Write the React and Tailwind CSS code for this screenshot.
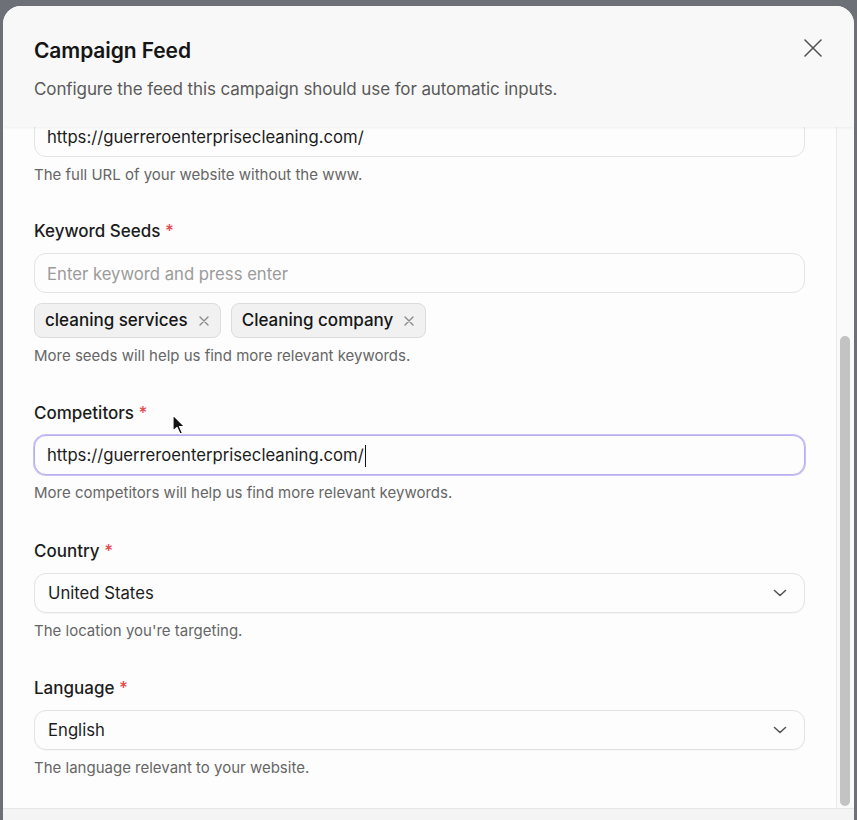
import { useState } from "react";

const font = { fontFamily: "Inter, 'Noto Sans', sans-serif" };

const Chevron = () => (
  <svg width="14" height="8" viewBox="0 0 14 8" fill="none" className="text-[#555]">
    <path d="M1.5 1.5L7 6.5L12.5 1.5" stroke="currentColor" strokeWidth="1.6" strokeLinecap="round" strokeLinejoin="round" />
  </svg>
);

const SmallX = () => (
  <svg width="10" height="10" viewBox="0 0 10 10" fill="none" className="text-[#8a8a8a]">
    <path d="M1 1L9 9M9 1L1 9" stroke="currentColor" strokeWidth="1.4" strokeLinecap="round" />
  </svg>
);

const Label = ({ children }) => (
  <label className="block h-6 text-[17px] leading-6 font-medium text-[#1c1c1c]">
    {children} <span className="text-[#e5484d]">*</span>
  </label>
);

const Help = ({ children }) => (
  <p className="mt-2 h-5 text-[15px] leading-5 text-[#666]">{children}</p>
);

const Select = ({ value }) => (
  <div className="mt-[10px] h-10 w-full flex items-center justify-between rounded-xl border border-[#e3e3e3] bg-[#fdfdfd] pl-[13px] pr-[17px] shadow-[0_1px_1px_rgba(0,0,0,0.03)]">
    <span className="pt-[2px] text-[16.7px] text-[#1c1c1c]">{value}</span>
    <Chevron />
  </div>
);

export default function App() {
  const [seeds, setSeeds] = useState(["cleaning services", "Cleaning company"]);

  return (
    <div className="w-[857px] h-[820px] overflow-hidden bg-[#6d7076] pt-[6px] pl-[3px] pr-[3px]" style={font}>
      <div className="relative h-full flex flex-col rounded-t-[18px] bg-[#fdfdfd] overflow-hidden">
        {/* header */}
        <div className="relative z-10 h-[121px] shrink-0 bg-[#f8f8f8] px-[31px] shadow-[0_1px_3px_rgba(0,0,0,0.06)]">
          <div className="flex items-start justify-between">
            <h2 className="mt-[31px] text-[21px] leading-7 font-semibold text-[#151515] tracking-[-0.1px]">Campaign Feed</h2>
            <button className="mt-[33px] mr-[1px] text-[#555]">
              <svg width="18" height="18" viewBox="0 0 18 18" fill="none">
                <path d="M1 1L17 17M17 1L1 17" stroke="currentColor" strokeWidth="1.6" strokeLinecap="round" />
              </svg>
            </button>
          </div>
          <p className="mt-[12px] text-[17px] leading-6 text-[#5a5a5a] tracking-[-0.1px]">Configure the feed this campaign should use for automatic inputs.</p>
        </div>

        {/* body */}
        <div className="flex flex-1 min-h-0">
          <div className="flex-1 overflow-hidden pl-[31px] pr-[31px]">
            <div className="mt-[-10px]">
              <div className="h-10 w-full flex items-center rounded-xl border border-[#e3e3e3] bg-[#fdfdfd] px-[12px]">
                <span className="pt-[1px] text-[16.7px] text-[#1c1c1c]">https://guerreroenterprisecleaning.com/</span>
              </div>
              <Help>The full URL of your website without the www.</Help>
            </div>

            <div className="mt-[34px]">
              <Label>Keyword Seeds</Label>
              <input
                placeholder="Enter keyword and press enter"
                className="mt-[10px] h-10 w-full rounded-xl border border-[#e3e3e3] bg-[#fdfdfd] px-[12px] pt-[1px] text-[16.7px] text-[#1c1c1c] placeholder:text-[#9b9b9b] outline-none"
              />
              <div className="mt-[10px] flex gap-[10px]">
                {seeds.map((s) => (
                  <span
                    key={s}
                    className="h-[35px] inline-flex items-center gap-[11px] rounded-lg border border-[#dcdcdc] bg-[#f1f1f1] pl-[10px] pr-[11px] text-[17px] font-medium text-[#161616]"
                  >
                    {s}
                    <button onClick={() => setSeeds(seeds.filter((x) => x !== s))}>
                      <SmallX />
                    </button>
                  </span>
                ))}
              </div>
              <Help>More seeds will help us find more relevant keywords.</Help>
            </div>

            <div className="mt-[35px]">
              <Label>Competitors</Label>
              <div className="mt-[10px] h-10 w-full flex items-center rounded-xl border border-[#b7aef2] ring-1 ring-[#c9c2f6] bg-[#fdfdfd] px-[12px] pt-[2px]">
                <span className="text-[16.7px] text-[#1c1c1c]">https://guerreroenterprisecleaning.com/</span>
                <span className="ml-px h-[22px] w-px bg-[#111]" />
              </div>
              <Help>More competitors will help us find more relevant keywords.</Help>
            </div>

            <div className="mt-[36px]">
              <Label>Country</Label>
              <Select value="United States" />
              <Help>The location you're targeting.</Help>
            </div>

            <div className="mt-[35px]">
              <Label>Language</Label>
              <Select value="English" />
              <Help>The language relevant to your website.</Help>
            </div>
          </div>

          {/* scrollbar */}
          <div className="w-[18px] shrink-0 border-l border-[#ebebeb] bg-[#fafafa] pt-[209px] pb-[2px] pl-[3px] pr-[4px]">
            <div className="h-full w-[10px] rounded-full bg-[#c3c3c3]" />
          </div>
        </div>

        {/* footer */}
        <div className="h-[12px] shrink-0 border-t border-[#e6e6e6] bg-[#f4f4f4]" />

        {/* mouse pointer */}
        <svg className="absolute left-[169px] top-[408px] z-20" width="14" height="22" viewBox="0 0 14 22">
          <path d="M1 1L1 17L5 13.5L8 20L10.5 19L7.5 12.5L12.5 12.5Z" fill="#111" stroke="#fff" strokeWidth="1.2" strokeLinejoin="round" />
        </svg>
      </div>
    </div>
  );
}
